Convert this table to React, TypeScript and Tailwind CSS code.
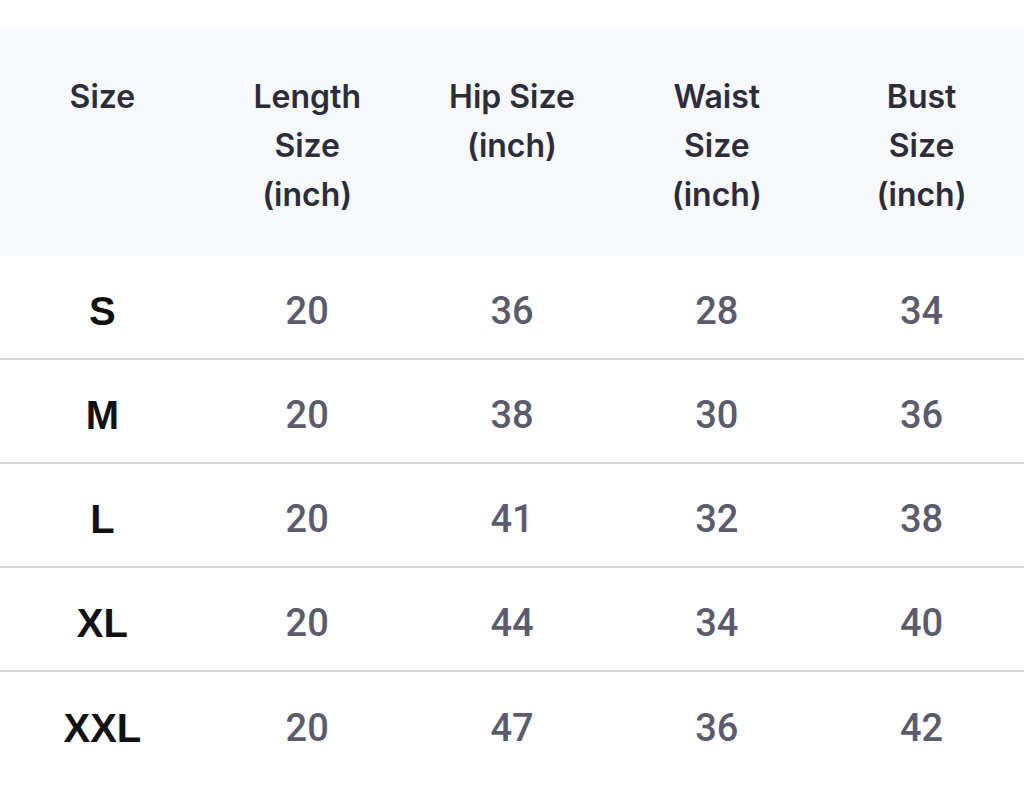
import React from 'react';

const headers: string[][] = [
  ['Size'],
  ['Length', 'Size', '(inch)'],
  ['Hip Size', '(inch)'],
  ['Waist', 'Size', '(inch)'],
  ['Bust', 'Size', '(inch)'],
];

const rows: [string, number, number, number, number][] = [
  ['S', 20, 36, 28, 34],
  ['M', 20, 38, 30, 36],
  ['L', 20, 41, 32, 38],
  ['XL', 20, 44, 34, 40],
  ['XXL', 20, 47, 36, 42],
];

const App: React.FC = () => {
  return (
    <div className="min-h-screen bg-white pt-[28px]">
      {/* Header */}
      <div className="grid grid-cols-5 h-[228px] bg-[#f7f8fc] pt-[44px]">
        {headers.map((lines, i) => (
          <div
            key={i}
            className="flex flex-col items-center text-[32px] leading-[49px] font-semibold text-[#2d2d3a]"
            style={{ fontFamily: 'Inter, "Noto Sans", sans-serif' }}
          >
            {lines.map((l) => (
              <span key={l}>{l}</span>
            ))}
          </div>
        ))}
      </div>

      {/* Rows */}
      {rows.map((r, idx) => (
        <div
          key={r[0]}
          className={`grid grid-cols-5 items-center h-[104px] pt-[8px] ${
            idx < rows.length - 1 ? 'border-b-2 border-[#d3d3de]' : ''
          }`}
        >
          <div
            className="text-center text-[40px] font-bold text-[#111111]"
            style={{ fontFamily: '"Liberation Sans", Arial, sans-serif' }}
          >
            {r[0]}
          </div>
          {r.slice(1).map((v, j) => (
            <div
              key={j}
              className="text-center text-[38px] font-medium text-[#5c5b6e]"
              style={{ fontFamily: 'Roboto, sans-serif' }}
            >
              {v}
            </div>
          ))}
        </div>
      ))}
    </div>
  );
};

export default App;
